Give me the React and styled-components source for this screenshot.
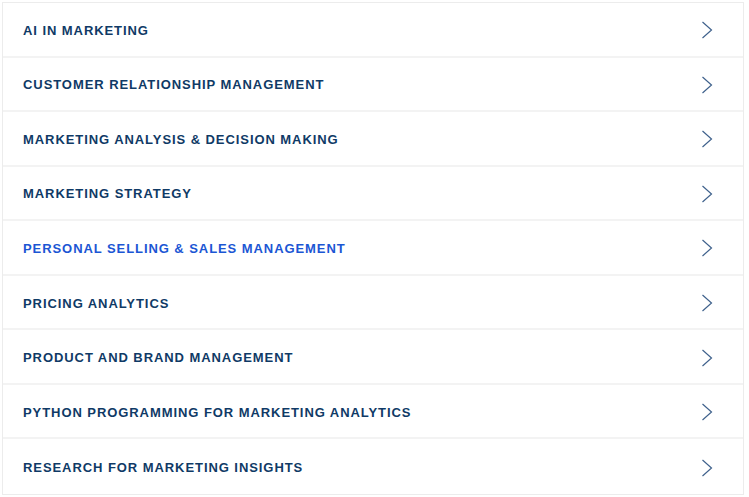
import React from "react";
import styled, { createGlobalStyle } from "styled-components";

const GlobalStyle = createGlobalStyle`
  body {
    margin: 0;
    background: #ffffff;
    font-family: "Liberation Sans", Arial, sans-serif;
  }
`;

const Page = styled.div`
  padding: 2px;
`;

const List = styled.ul`
  list-style: none;
  margin: 0;
  padding: 0;
  width: 740px;
  border: 1px solid #ececec;
  background: #ffffff;
`;

const Row = styled.li`
  display: flex;
  align-items: center;
  justify-content: space-between;
  box-sizing: border-box;
  height: 54.55px;
  padding: 2px 30px 0 20px;
  border-bottom: 2px solid #f3f3f3;
  cursor: pointer;

  &:last-child {
    border-bottom: none;
  }
`;

const Label = styled.span`
  font-size: 13px;
  font-weight: 700;
  letter-spacing: 0.93px;
  text-transform: uppercase;
  color: ${(p) => (p.active ? "#1b56d4" : "#0f3a66")};
`;

const Chevron = () => (
  <svg width="12" height="18" viewBox="0 0 12 18" fill="none">
    <path d="M1.5 1 L10.5 9 L1.5 17" stroke="#3f618c" strokeWidth="1.2" />
  </svg>
);

const items = [
  "AI in Marketing",
  "Customer Relationship Management",
  "Marketing Analysis & Decision Making",
  "Marketing Strategy",
  "Personal Selling & Sales Management",
  "Pricing Analytics",
  "Product and Brand Management",
  "Python Programming for Marketing Analytics",
  "Research for Marketing Insights",
];

export default function App() {
  return (
    <Page>
      <GlobalStyle />
      <List>
        {items.map((item, i) => (
          <Row key={item}>
            <Label active={i === 4}>{item}</Label>
            <Chevron />
          </Row>
        ))}
      </List>
    </Page>
  );
}
